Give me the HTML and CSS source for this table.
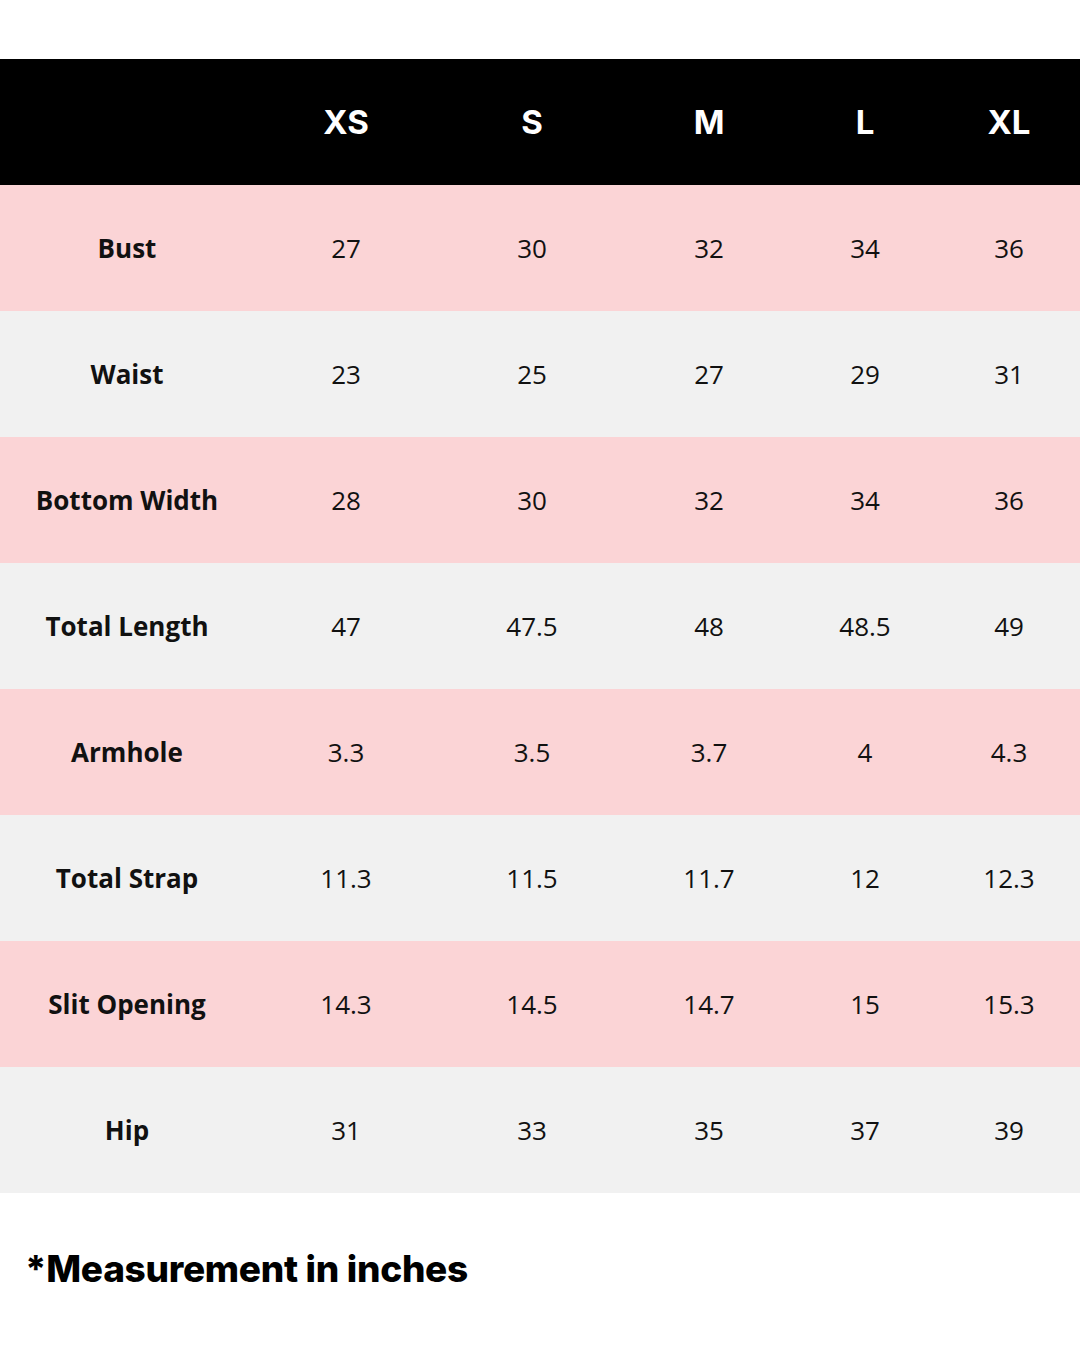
FILE: index.html
```html
<!DOCTYPE html>
<html>
<head>
<meta charset="utf-8">
<link rel="stylesheet" href="styles.css">
</head>
<body>
<div class="page">
  <div class="table">
    <div class="row head">
      <div class="cell label"></div>
      <div class="cell">XS</div>
      <div class="cell">S</div>
      <div class="cell">M</div>
      <div class="cell">L</div>
      <div class="cell">XL</div>
    </div>
    <div class="row pink">
      <div class="cell label">Bust</div>
      <div class="cell">27</div><div class="cell">30</div><div class="cell">32</div><div class="cell">34</div><div class="cell">36</div>
    </div>
    <div class="row gray">
      <div class="cell label">Waist</div>
      <div class="cell">23</div><div class="cell">25</div><div class="cell">27</div><div class="cell">29</div><div class="cell">31</div>
    </div>
    <div class="row pink">
      <div class="cell label">Bottom Width</div>
      <div class="cell">28</div><div class="cell">30</div><div class="cell">32</div><div class="cell">34</div><div class="cell">36</div>
    </div>
    <div class="row gray">
      <div class="cell label">Total Length</div>
      <div class="cell">47</div><div class="cell">47.5</div><div class="cell">48</div><div class="cell">48.5</div><div class="cell">49</div>
    </div>
    <div class="row pink">
      <div class="cell label">Armhole</div>
      <div class="cell">3.3</div><div class="cell">3.5</div><div class="cell">3.7</div><div class="cell">4</div><div class="cell">4.3</div>
    </div>
    <div class="row gray">
      <div class="cell label">Total Strap</div>
      <div class="cell">11.3</div><div class="cell">11.5</div><div class="cell">11.7</div><div class="cell">12</div><div class="cell">12.3</div>
    </div>
    <div class="row pink">
      <div class="cell label">Slit Opening</div>
      <div class="cell">14.3</div><div class="cell">14.5</div><div class="cell">14.7</div><div class="cell">15</div><div class="cell">15.3</div>
    </div>
    <div class="row gray">
      <div class="cell label">Hip</div>
      <div class="cell">31</div><div class="cell">33</div><div class="cell">35</div><div class="cell">37</div><div class="cell">39</div>
    </div>
  </div>
  <p class="note">*Measurement in inches</p>
</div>
</body>
</html>
```
FILE: styles.css
```css
html, body {
  margin: 0;
  padding: 0;
  background: #ffffff;
}
.page {
  width: 1080px;
  height: 1350px;
  padding-top: 59px;
  box-sizing: border-box;
  font-family: "Open Sans", "Liberation Sans", sans-serif;
  color: #111;
}
.row {
  display: grid;
  grid-template-columns: 254px 184px 188px 166px 146px 142px;
  height: 126px;
  align-items: center;
}
.cell {
  text-align: center;
  font-size: 26px;
  font-weight: 400;
}
.cell.label {
  font-weight: 700;
}
.head {
  background: #000;
  color: #fff;
}
.head .cell {
  font-family: Inter, "Liberation Sans", sans-serif;
  font-weight: 700;
  font-size: 33px;
}
.pink { background: #fbd4d6; }
.gray { background: #f1f1f1; }
.note {
  margin: 53px 0 0 25px;
  font-family: Inter, "Liberation Sans", sans-serif;
  font-weight: 800;
  font-size: 37px;
  letter-spacing: -0.3px;
  color: #000;
}
```
